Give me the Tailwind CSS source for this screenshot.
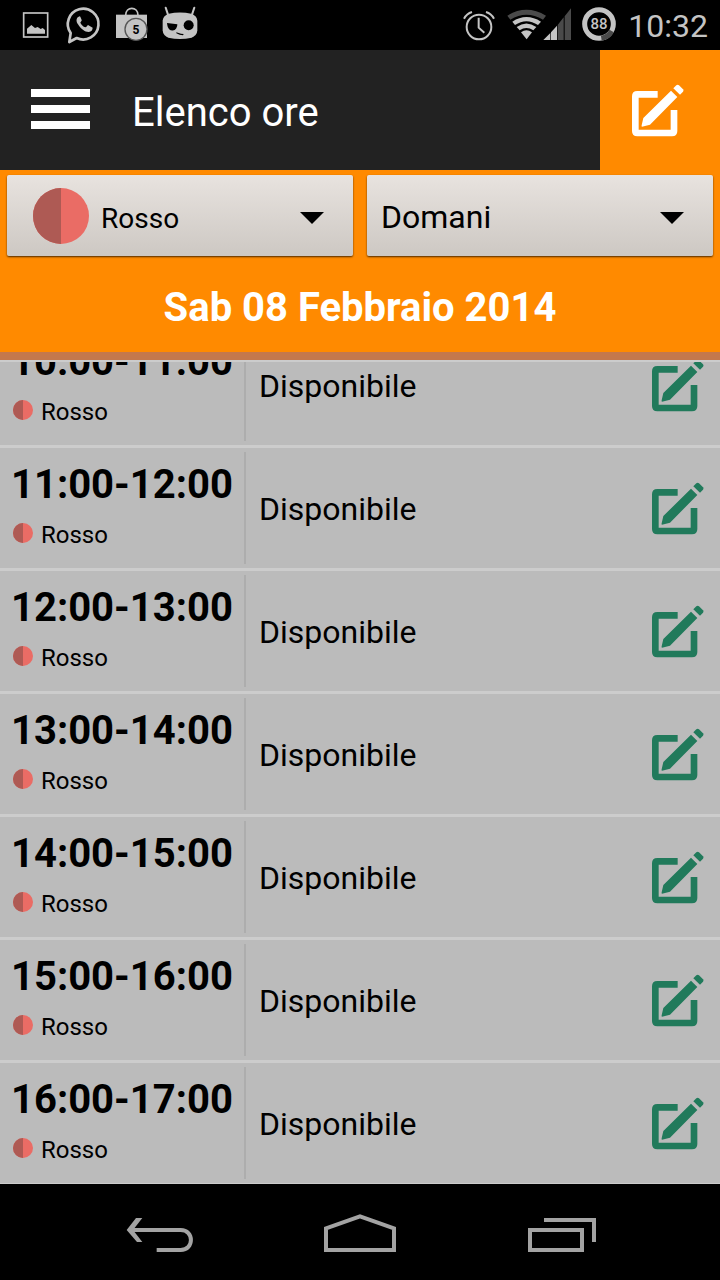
<!DOCTYPE html>
<html lang="it">
<head>
	<title>Elenco ore</title>
	<meta charset="UTF-8"/>
	<meta name="viewport" content="width=device-width, initial-scale=1.0"/>
	<script src="https://cdn.jsdelivr.net/npm/@tailwindcss/browser@4"></script>
</head>
<body class="flex flex-col h-screen overflow-hidden bg-black font-['Roboto',sans-serif] text-black">
	<!-- Icone condivise -->
	<svg class="hidden">
		<symbol id="edit" viewBox="150 90 180 180">
			<path d="M233 133H172Q166 133 166 139V243Q166 249 172 249H276Q282 249 282 243V180" fill="none" stroke="currentColor" stroke-width="20"/>
			<path d="M273 122L292 141L210 224L186 230Q184 230 185 226L190 204Z" fill="currentColor"/>
			<path d="M280 115L289 106Q293 103 297 106L309 118Q312 122 309 125L300 134Z" fill="currentColor"/>
		</symbol>
		<symbol id="ball" viewBox="0 0 56 56">
			<circle cx="28" cy="28" r="28" fill="#ea6c65"/>
			<path d="M28 0A28 28 0 0 0 28 56Z" fill="#ae5a54"/>
		</symbol>
	</svg>

	<!-- Barra di stato -->
	<div class="flex items-center shrink-0 h-[50px] pl-3 pr-3 text-[#c4c4c4]">
		<svg class="w-12 h-[50px]" viewBox="36 0 144 150" fill="currentColor">
			<rect x="71" y="39" width="72" height="72" fill="none" stroke="currentColor" stroke-width="5"/>
			<path d="M81 101V86L94 75L105 84L113 81L122 87L128 84L135 90V101Z"/>
		</svg>
		<svg class="w-12 h-[50px]" viewBox="180 0 144 150" fill="currentColor">
			<path d="M212 99A46 46 0 1 1 230 114L208 126Z" fill="none" stroke="currentColor" stroke-width="8" stroke-linejoin="round"/>
			<path d="M236 50C228 54 228 64 234 73C243 87 254 96 266 96C274 95 278 90 278 83L264 75C260 77 260 82 256 82C249 80 244 74 241 68C242 65 246 63 245 60L241 50Q239 48 236 50Z"/>
		</svg>
		<svg class="w-12 h-[50px]" viewBox="324 0 144 150" fill="currentColor">
			<path d="M377 46C377 18 414 18 414 46" fill="none" stroke="currentColor" stroke-width="5"/>
			<rect x="348" y="44" width="93" height="70"/>
			<circle cx="408" cy="88" r="33" stroke="#555" stroke-width="4"/>
			<text x="408" y="101" text-anchor="middle" font-size="36" font-weight="700" fill="#000">5</text>
		</svg>
		<svg class="w-12 h-[50px]" viewBox="468 0 144 150" fill="currentColor">
			<path d="M497 23L504 44M583 23L576 44" stroke="currentColor" stroke-width="6" stroke-linecap="round"/>
			<path d="M488 62Q489 47 506 41Q540 34 574 41Q591 47 592 62V91Q591 107 575 113Q540 121 505 113Q489 107 488 91Z"/>
			<g fill="#000">
				<path d="M501 69L532 73A15 17 0 0 1 502 76Z"/>
				<circle cx="566" cy="76" r="15"/>
				<path d="M529 97L543 101L551 102L549 106L539 104L529 100Z"/>
			</g>
		</svg>
		<svg class="ml-auto w-10 h-[50px]" viewBox="30 0 120 150" fill="none" stroke="currentColor" stroke-width="6">
			<circle cx="87" cy="81" r="37"/>
			<path d="M86 53V83L103 98"/>
			<path d="M42 56Q50 41 66 36M108 36Q124 41 132 56"/>
		</svg>
		<svg class="ml-1 w-[70px] h-[50px]" viewBox="162 0 210 150" fill="currentColor">
			<path d="M172 47Q229 12 288 47L279 59Q229 30 181 59Z" fill="#4a4a4a"/>
			<path d="M187 65Q229 37 273 65L264 75Q229 52 195 75Z"/>
			<path d="M200 81Q229 60 259 81L250 91Q229 77 209 91Z"/>
			<path d="M213 97Q229 85 246 97L230 118Z"/>
			<path d="M280 120L301 99V120ZM303 97L321 77V120H303Z"/>
			<path d="M323 75L341 52V120H323ZM344 49L363 25V120H344Z" fill="#4a4a4a"/>
		</svg>
		<svg class="ml-[6px] w-10 h-[50px]" viewBox="390 0 120 150" fill="none" stroke-width="15">
			<circle cx="447" cy="72" r="43" stroke="currentColor"/>
			<path d="M454 115A43 43 0 0 0 485 93" stroke="#4a4a4a"/>
			<text x="447" y="88" text-anchor="middle" font-size="45" font-weight="500" fill="currentColor">88</text>
		</svg>
		<span class="ml-2 pt-0.5 text-[32px] leading-10">10:32</span>
	</div>

	<!-- Intestazione -->
	<header class="flex items-center shrink-0 h-[120px] bg-[#222222] text-white">
		<button class="flex flex-col gap-2 ml-[31px] mb-0.5 w-[59px]" aria-label="Menu">
			<span class="w-full h-2 bg-white"></span>
			<span class="w-full h-2 bg-white"></span>
			<span class="w-full h-2 bg-white"></span>
		</button>
		<h1 class="ml-[42px] pt-1.5 text-[40px] leading-12">Elenco ore</h1>
		<button class="grid place-items-center ml-auto w-[120px] h-full bg-[#ff8a00]" aria-label="Modifica">
			<svg class="size-[60px]"><use href="#edit"/></svg>
		</button>
	</header>

	<!-- Filtri e data -->
	<section class="shrink-0 bg-[#ff8a00] border-b-8 border-[#c4784c]">
		<div class="grid grid-cols-2 pt-[5px]">
			<div class="relative px-[7px]">
				<select aria-label="Campo" class="block appearance-none w-full h-[81px] pt-1.5 pl-[94px] rounded-xs bg-linear-to-b from-[#e8e3df] to-[#cdc8c3] shadow-[0_1px_2px_rgba(0,0,0,0.7)] text-[28px]">
					<option>Rosso</option>
				</select>
				<svg class="absolute left-[33px] top-[13px] size-14 pointer-events-none"><use href="#ball"/></svg>
				<svg class="absolute right-9 top-[37px] w-6 h-3 pointer-events-none" viewBox="0 0 24 12"><path d="M0 0H24L12 12Z"/></svg>
			</div>
			<div class="relative px-[7px]">
				<select aria-label="Giorno" class="block appearance-none w-full h-[81px] pt-0.5 pl-[14px] rounded-xs bg-linear-to-b from-[#e8e3df] to-[#cdc8c3] shadow-[0_1px_2px_rgba(0,0,0,0.7)] text-[32px]">
					<option>Domani</option>
				</select>
				<svg class="absolute right-9 top-[37px] w-6 h-3 pointer-events-none" viewBox="0 0 24 12"><path d="M0 0H24L12 12Z"/></svg>
			</div>
		</div>
		<h2 class="flex items-center justify-center h-24 pt-2 text-[40px] leading-12 font-bold text-white">Sab 08 Febbraio 2014</h2>
	</section>

	<!-- Elenco delle ore, la prima riga resta a metà sotto la testata -->
	<ul id="hours" class="flex-1 min-h-0 overflow-hidden border-t-2 border-[#cccccc] bg-[#bbbbbb]"></ul>

	<!-- Barra di navigazione -->
	<nav class="flex justify-center shrink-0 h-24 text-[#a3a3a3]">
		<button class="flex justify-center w-[200px]" aria-label="Indietro">
			<svg class="size-24" viewBox="36 42 288 288" fill="none" stroke="currentColor" stroke-width="12">
				<path d="M94 180H242C283 180 283 240 242 240H170"/>
				<path d="M108 144H127L99 180L127 216H111L80 180Z" fill="currentColor" stroke="none"/>
			</svg>
		</button>
		<button class="flex justify-center w-[200px]" aria-label="Home">
			<svg class="size-24" viewBox="636 42 288 288" fill="none" stroke="currentColor" stroke-width="12">
				<path d="M678 240V175L780 139L882 175V240Z"/>
			</svg>
		</button>
		<button class="flex justify-center w-[200px]" aria-label="Recenti">
			<svg class="size-24" viewBox="1236 42 288 288" fill="none" stroke="currentColor" stroke-width="12">
				<path d="M1290 180H1446V240H1290ZM1332 150H1482V216"/>
			</svg>
		</button>
	</nav>

	<script>
		var list = document.getElementById('hours')

		// Una riga per ogni ora prenotabile
		for(var h = 10; h < 17; h++){
			list.insertAdjacentHTML('beforeend', `
				<li class="flex items-stretch h-[123px] first:-mt-[37px] py-1 border-b-3 border-[#cccccc]">
					<div class="w-[246px] pl-[11px] pt-[9px] border-r-2 border-[#adadad]">
						<p class="text-[40px] leading-12 font-bold">${h}:00-${h + 1}:00</p>
						<p class="flex items-center gap-2 pt-2 pl-0.5 text-2xl leading-9"><svg class="size-5 mb-1"><use href="#ball"/></svg>Rosso</p>
					</div>
					<p class="flex-1 self-center pl-[13px] pt-0.5 text-[32px] leading-10">Disponibile</p>
					<button class="self-center mr-[10px] text-[#217a5b]" aria-label="Prenota"><svg class="size-[60px]"><use href="#edit"/></svg></button>
				</li>`)
		}
	</script>
</body>
</html>
